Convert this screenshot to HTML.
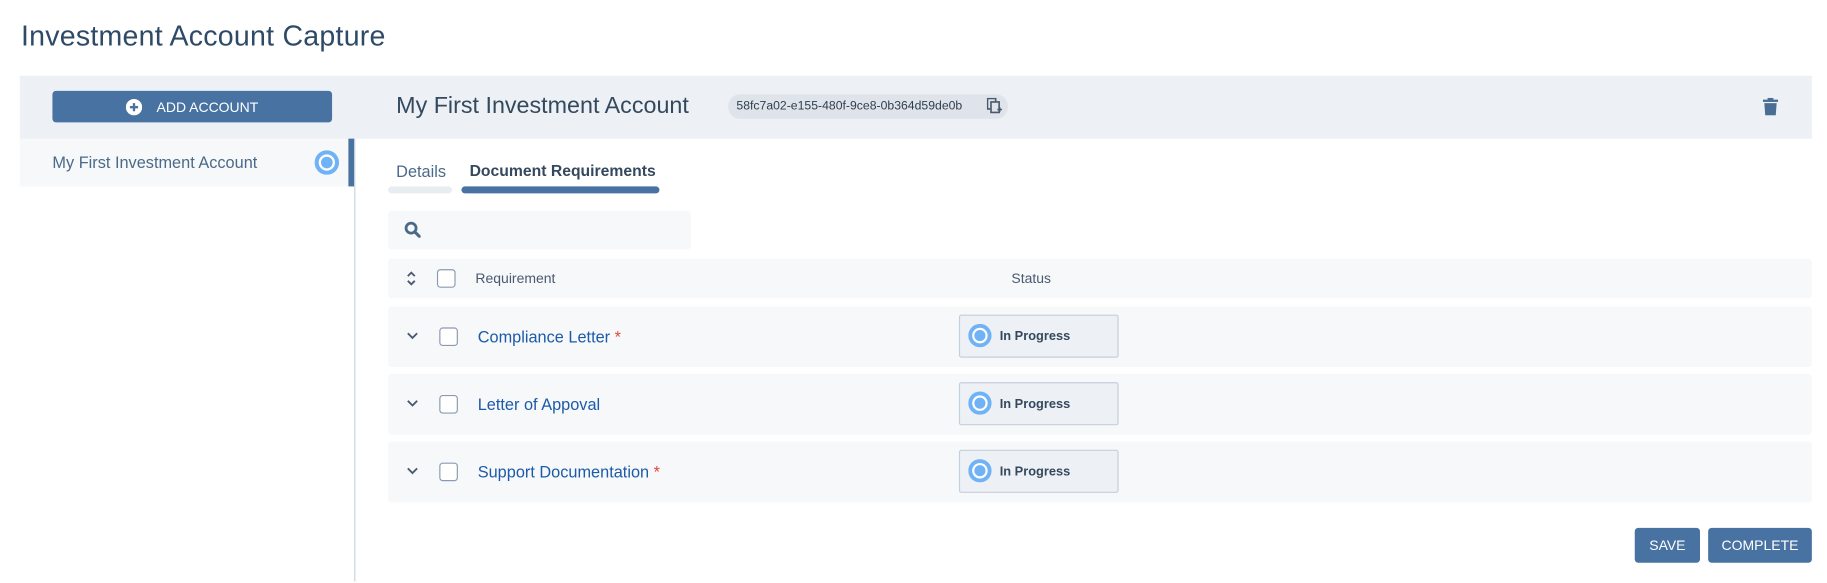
<!DOCTYPE html>
<html><head><style>
*{box-sizing:border-box;margin:0;padding:0}
html,body{width:1827px;height:582px;overflow:hidden}
body{background:#fff;font-family:"Liberation Sans",sans-serif;color:#34495e}
#w{position:absolute;left:0;top:0;width:1568px;height:500px;transform:scale(1.16518);transform-origin:0 0}
.a{position:absolute}
.title{left:18px;top:18px;font-size:24.5px;color:#2f4a66;letter-spacing:.2px}
.hdr{left:17px;top:65px;width:1538px;height:54px;background:#edf1f5}
.btn{background:#4872a1;color:#fff;border-radius:3px;font-size:12px;display:flex;align-items:center;justify-content:center}
.row{left:333px;width:1222px;background:#f6f8fa;border-radius:3px}
.cb{width:16px;height:16px;border:1.6px solid #8a9bb0;border-radius:3px;background:#fff}
.lbl{font-size:14px;color:#1d5aa8;white-space:nowrap}
.badge{left:823px;width:137px;height:37px;background:#edf1f5;border:1px solid #c5cfda;border-radius:2px}
.star{color:#e0483e}
.ip{font-size:11px;font-weight:bold;color:#34495e}
</style></head><body><div id="w">
<div class="a title">Investment Account Capture</div>
<div class="a hdr"></div>
<div class="a btn" style="left:45px;top:78px;width:240px;height:27px">
<svg width="14" height="14" viewBox="0 0 14 14" style="margin-right:12px"><circle cx="7" cy="7" r="7" fill="#fff"/><path d="M7 3.5v7M3.5 7h7" stroke="#4872a1" stroke-width="2"/></svg>ADD ACCOUNT</div>
<div class="a" style="left:340px;top:80px;font-size:20px;color:#34495e;white-space:nowrap">My First Investment Account</div>
<div class="a" style="left:625px;top:81px;width:240px;height:21px;background:#dfe4ea;border-radius:10px;font-size:10.5px;color:#2f3e4e;padding:4px 0 0 7px;white-space:nowrap">58fc7a02-e155-480f-9ce8-0b364d59de0b</div>
<svg class="a" style="left:847px;top:84px" width="13" height="14" viewBox="0 0 13 14"><rect x="0.5" y="0.5" width="7" height="9" fill="none" stroke="#4a5a6a" stroke-width="1.4"/><rect x="3.5" y="3.5" width="7" height="9" fill="#dfe4ea" stroke="#4a5a6a" stroke-width="1.4"/><path d="M9 10h4M11 8v4" stroke="#4a5a6a" stroke-width="1.3"/></svg>
<svg class="a" style="left:1513px;top:84px" width="13" height="15" viewBox="0 0 13 15"><rect x="0" y="1.5" width="13" height="2" fill="#4a6d94"/><rect x="4" y="0" width="5" height="2" fill="#4a6d94"/><path d="M1.2 4.5h10.6l-.8 10.5H2z" fill="#4a6d94"/></svg>
<div class="a" style="left:17px;top:119px;width:283px;height:41px;background:#f6f8fa"></div>
<div class="a" style="left:45px;top:131px;font-size:14px;color:#4a6a8a;white-space:nowrap">My First Investment Account</div>
<svg class="a" style="left:270px;top:129px" width="21" height="21" viewBox="0 0 21 21"><circle cx="10.5" cy="10.5" r="10.5" fill="#6fb2f5"/><circle cx="10.5" cy="10.5" r="6" fill="none" stroke="#fff" stroke-width="2"/></svg>
<div class="a" style="left:299px;top:119px;width:5px;height:41px;background:#4872a1"></div>
<div class="a" style="left:304px;top:119px;width:1px;height:380px;background:#c9d4e0"></div>
<div class="a" style="left:340px;top:139px;font-size:14px;color:#4a6a8a">Details</div>
<div class="a" style="left:403px;top:139px;font-size:13.5px;font-weight:bold;color:#34495e;white-space:nowrap">Document Requirements</div>
<div class="a" style="left:333px;top:160px;width:55px;height:6px;background:#e8edf2;border-radius:3px"></div>
<div class="a" style="left:396px;top:160px;width:170px;height:6px;background:#4872a1;border-radius:3px"></div>
<div class="a" style="left:333px;top:181px;width:260px;height:33px;background:#f6f8fa;border-radius:3px"></div>
<svg class="a" style="left:347px;top:190px" width="14" height="14" viewBox="0 0 14 14"><circle cx="5.8" cy="5.8" r="4.3" fill="none" stroke="#4a6a8a" stroke-width="2.4"/><path d="M9 9l4 4" stroke="#4a6a8a" stroke-width="2.6" stroke-linecap="round"/></svg>
<div class="a row" style="top:222px;height:34px"></div>
<svg class="a" style="left:348px;top:232px" width="10" height="14" viewBox="0 0 10 14"><path d="M2 5l3-3 3 3M2 9l3 3 3-3" stroke="#4a5a70" stroke-width="1.6" fill="none"/></svg>
<div class="a cb" style="left:375px;top:231px"></div>
<div class="a" style="left:408px;top:232px;font-size:12px;color:#4a5a70">Requirement</div>
<div class="a" style="left:868px;top:232px;font-size:12px;color:#4a5a70">Status</div>

<div class="a row" style="top:263px;height:52px"></div>
<div class="a row" style="top:321px;height:52px"></div>
<div class="a row" style="top:379px;height:52px"></div>

<svg class="a" style="left:349px;top:285px" width="10" height="7" viewBox="0 0 10 7"><path d="M1 1l4 4 4-4" stroke="#4a5a70" stroke-width="1.6" fill="none"/></svg>
<div class="a cb" style="left:377px;top:281px"></div>
<div class="a lbl" style="left:410px;top:281px">Compliance Letter <span class="star">*</span></div>
<svg class="a" style="left:349px;top:343px" width="10" height="7" viewBox="0 0 10 7"><path d="M1 1l4 4 4-4" stroke="#4a5a70" stroke-width="1.6" fill="none"/></svg>
<div class="a cb" style="left:377px;top:339px"></div>
<div class="a lbl" style="left:410px;top:339px">Letter of Appoval</div>
<svg class="a" style="left:349px;top:401px" width="10" height="7" viewBox="0 0 10 7"><path d="M1 1l4 4 4-4" stroke="#4a5a70" stroke-width="1.6" fill="none"/></svg>
<div class="a cb" style="left:377px;top:397px"></div>
<div class="a lbl" style="left:410px;top:397px">Support Documentation <span class="star">*</span></div>

<div class="a badge" style="top:270px"></div>
<div class="a badge" style="top:328px"></div>
<div class="a badge" style="top:386px"></div>
<svg class="a" style="left:831px;top:278px" width="20" height="20" viewBox="0 0 21 21"><circle cx="10.5" cy="10.5" r="10.5" fill="#6fb2f5"/><circle cx="10.5" cy="10.5" r="6" fill="none" stroke="#fff" stroke-width="2"/></svg>
<svg class="a" style="left:831px;top:336px" width="20" height="20" viewBox="0 0 21 21"><circle cx="10.5" cy="10.5" r="10.5" fill="#6fb2f5"/><circle cx="10.5" cy="10.5" r="6" fill="none" stroke="#fff" stroke-width="2"/></svg>
<svg class="a" style="left:831px;top:394px" width="20" height="20" viewBox="0 0 21 21"><circle cx="10.5" cy="10.5" r="10.5" fill="#6fb2f5"/><circle cx="10.5" cy="10.5" r="6" fill="none" stroke="#fff" stroke-width="2"/></svg>
<div class="a ip" style="left:858px;top:283px">In Progress</div>
<div class="a ip" style="left:858px;top:341px">In Progress</div>
<div class="a ip" style="left:858px;top:399px">In Progress</div>

<div class="a btn" style="left:1403px;top:453px;width:56px;height:30px">SAVE</div>
<div class="a btn" style="left:1466px;top:453px;width:89px;height:30px">COMPLETE</div>
</div></body></html>
